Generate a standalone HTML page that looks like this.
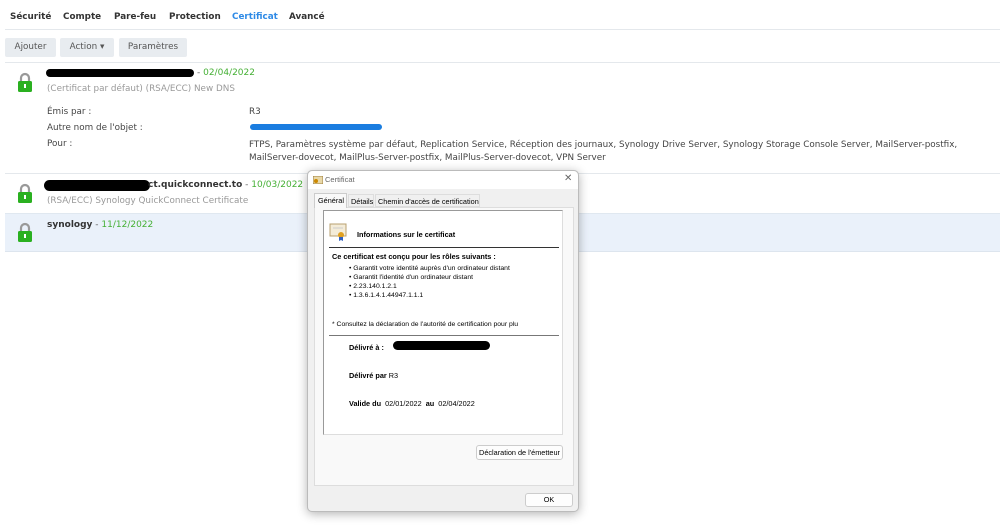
<!DOCTYPE html><html><head><style>
*{margin:0;padding:0;box-sizing:border-box}
body{width:1000px;height:526px;background:#fff;position:relative;overflow:hidden;font-family:"DejaVu Sans","Liberation Sans",sans-serif;font-size:8.8px;color:#444}
.a{position:absolute;white-space:nowrap}
.tab{font-weight:bold;font-size:8.8px;color:#333;top:12px}
.btn{position:absolute;top:38px;height:19px;background:#e8ecf0;border-radius:2px;color:#555;font-size:8.8px;line-height:19px;text-align:center}
.lock{position:absolute;width:14px;height:20px}
.g{color:#45b035}
.gr{color:#999}
.blk{position:absolute;background:#000;border-radius:6px}
.d{font-family:"Liberation Sans",sans-serif;font-size:7.3px;color:#000}
.db{font-weight:bold}
</style></head><body>
<div class="a tab" style="left:10px">Sécurité</div>
<div class="a tab" style="left:63px">Compte</div>
<div class="a tab" style="left:114px">Pare-feu</div>
<div class="a tab" style="left:169px">Protection</div>
<div class="a tab" style="left:232px;color:#2e8ae6">Certificat</div>
<div class="a tab" style="left:289px">Avancé</div>
<div class="a" style="left:5px;top:29px;width:995px;height:1px;background:#e4e8ec"></div>
<div class="btn" style="left:5px;width:51px">Ajouter</div>
<div class="btn" style="left:60px;width:54px">Action ▾</div>
<div class="btn" style="left:119px;width:68px">Paramètres</div>
<div class="a" style="left:5px;top:62px;width:995px;height:1px;background:#e4e8ec"></div>
<svg class="lock" style="left:18px;top:72px" viewBox="0 0 14 20"><path d="M3 9V6a4 4 0 0 1 8 0v3" fill="none" stroke="#999" stroke-width="2.2"/><rect x="0" y="9" width="14" height="11" rx="1.5" fill="#2ab020"/><rect x="6" y="12" width="2" height="4" fill="#fff"/></svg>
<div class="blk" style="left:46px;top:69px;width:148px;height:8px"></div>
<div class="a" style="left:197px;top:68px;font-size:9px"><span style="color:#666">- </span><span class="g">02/04/2022</span></div>
<div class="a gr" style="left:47px;top:84px">(Certificat par défaut) (RSA/ECC) New DNS</div>
<div class="a" style="left:47px;top:107px">Émis par :</div>
<div class="a" style="left:47px;top:123px">Autre nom de l'objet :</div>
<div class="a" style="left:47px;top:139px">Pour :</div>
<div class="a" style="left:249px;top:107px">R3</div>
<div class="a" style="left:250px;top:124px;width:132px;height:6px;background:#1a7de0;border-radius:4px"></div>
<div class="a" style="left:249px;top:139px;line-height:13px">FTPS, Paramètres système par défaut, Replication Service, Réception des journaux, Synology Drive Server, Synology Storage Console Server, MailServer-postfix,<br>MailServer-dovecot, MailPlus-Server-postfix, MailPlus-Server-dovecot, VPN Server</div>
<div class="a" style="left:5px;top:173px;width:995px;height:1px;background:#e4e8ec"></div>
<svg class="lock" style="left:18px;top:183px" viewBox="0 0 14 20"><path d="M3 9V6a4 4 0 0 1 8 0v3" fill="none" stroke="#999" stroke-width="2.2"/><rect x="0" y="9" width="14" height="11" rx="1.5" fill="#2ab020"/><rect x="6" y="12" width="2" height="4" fill="#fff"/></svg>
<div class="blk" style="left:44px;top:180px;width:106px;height:11px"></div>
<div class="a" style="left:148px;top:180px;font-size:9px"><b style="color:#333">ct.quickconnect.to</b> <span style="color:#666">- </span><span class="g">10/03/2022</span></div>
<div class="a gr" style="left:47px;top:196px">(RSA/ECC) Synology QuickConnect Certificate</div>
<div class="a" style="left:5px;top:213px;width:995px;height:39px;background:#eaf1fa;border-top:1px solid #e0e8f0;border-bottom:1px solid #dde5ee"></div>
<svg class="lock" style="left:18px;top:222px" viewBox="0 0 14 20"><path d="M3 9V6a4 4 0 0 1 8 0v3" fill="none" stroke="#999" stroke-width="2.2"/><rect x="0" y="9" width="14" height="11" rx="1.5" fill="#2ab020"/><rect x="6" y="12" width="2" height="4" fill="#fff"/></svg>
<div class="a" style="left:47px;top:220px;font-size:9px"><b style="color:#333">synology</b> <span style="color:#666">- </span><span class="g">11/12/2022</span></div>

<div class="a" style="left:307px;top:170px;width:272px;height:342px;background:#f0f0f0;border:1px solid #bbb;border-radius:5px;box-shadow:0 2px 10px rgba(0,0,0,.3)">
<div class="a" style="left:0;top:0;width:270px;height:18px;background:#fff;border-radius:5px 5px 0 0"></div>
<svg class="a" style="left:5px;top:5px" width="10" height="8"><rect width="10" height="8" fill="#e8d8a8" stroke="#a08040"/><circle cx="3" cy="5" r="2" fill="#c80"/></svg>
<div class="a d" style="left:17px;top:4px;color:#666;font-size:7.5px">Certificat</div>
<div class="a" style="left:256px;top:2px;color:#666;font-size:10px">✕</div>
<div class="a" style="left:6px;top:36px;width:260px;height:279px;background:#f9f9f9;border:1px solid #ddd"></div>
<div class="a" style="left:6px;top:22px;width:33px;height:15px;background:#f9f9f9;border:1px solid #ccc;border-bottom:none"></div>
<div class="a d" style="left:10px;top:25px">Général</div>
<div class="a" style="left:40px;top:23px;width:26px;height:13px;border:1px solid #ddd"></div>
<div class="a d" style="left:43px;top:26px">Détails</div>
<div class="a" style="left:67px;top:23px;width:105px;height:13px;border:1px solid #ddd"></div>
<div class="a d" style="left:70px;top:26px">Chemin d'accès de certification</div>
<div class="a" style="left:15px;top:39px;width:240px;height:225px;background:#fff;border:1px solid #999;border-right-color:#ddd;border-bottom-color:#ddd"></div>
<svg class="a" style="left:21px;top:52px" width="18" height="18"><rect x="1" y="1" width="16" height="12" fill="#f4ecd8" stroke="#b8a070"/><line x1="4" y1="5" x2="14" y2="5" stroke="#ccc"/><circle cx="12" cy="12" r="3" fill="#e0a020"/><path d="M10 14v4l2-1 2 1v-4" fill="#3060c0"/></svg>
<div class="a d db" style="left:49px;top:59px">Informations sur le certificat</div>
<div class="a" style="left:21px;top:76px;width:230px;height:1px;background:#333"></div>
<div class="a d db" style="left:24px;top:81px">Ce certificat est conçu pour les rôles suivants :</div>
<div class="a d" style="left:41px;top:93px;line-height:9px;font-size:6.8px">• Garantit votre identité auprès d'un ordinateur distant<br>• Garantit l'identité d'un ordinateur distant<br>• 2.23.140.1.2.1<br>• 1.3.6.1.4.1.44947.1.1.1</div>
<div class="a d" style="left:24px;top:150px;font-size:6.8px">* Consultez la déclaration de l'autorité de certification pour plu</div>
<div class="a" style="left:21px;top:164px;width:230px;height:1px;background:#777"></div>
<div class="a d db" style="left:41px;top:172px">Délivré à :</div>
<div class="blk" style="left:85px;top:170px;width:97px;height:9px"></div>
<div class="a d" style="left:41px;top:200px"><b>Délivré par</b> R3</div>
<div class="a d" style="left:41px;top:228px"><b>Valide du</b>&nbsp; 02/01/2022 &nbsp;<b>au</b>&nbsp; 02/04/2022</div>
<div class="a d" style="left:168px;top:274px;width:87px;height:15px;background:#fdfdfd;border:1px solid #ccc;border-radius:3px;text-align:center;line-height:13px">Déclaration de l'émetteur</div>
<div class="a d" style="left:217px;top:322px;width:48px;height:14px;background:#fdfdfd;border:1px solid #ccc;border-radius:3px;text-align:center;line-height:12px">OK</div>
</div>
</body></html>
